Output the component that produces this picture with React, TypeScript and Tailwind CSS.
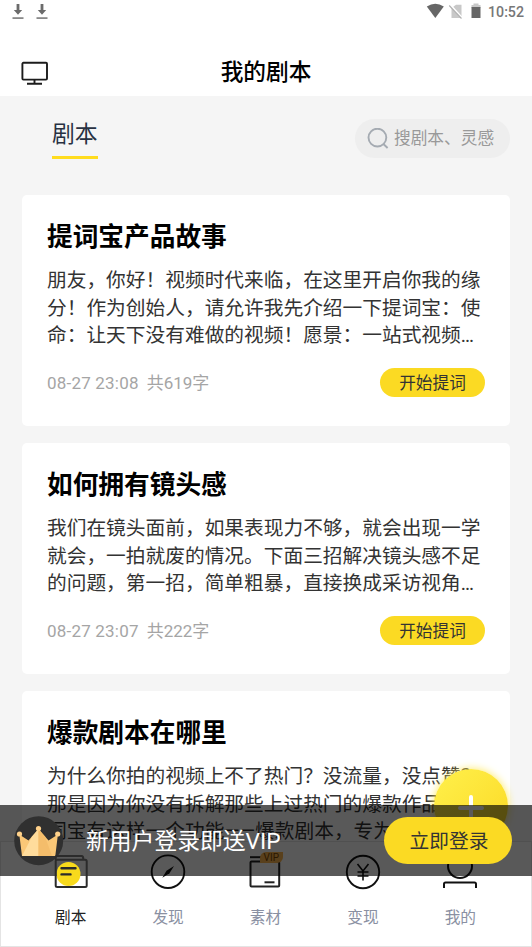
import React from "react";

const scripts = [
  {
    title: "提词宝产品故事",
    lines: ["朋友，你好！视频时代来临，在这里开启你我的缘", "分！作为创始人，请允许我先介绍一下提词宝：使", "命：让天下没有难做的视频！愿景：一站式视频…"],
    date: "08-27 23:08",
    count: "共619字",
  },
  {
    title: "如何拥有镜头感",
    lines: ["我们在镜头面前，如果表现力不够，就会出现一学", "就会，一拍就废的情况。下面三招解决镜头感不足", "的问题，第一招，简单粗暴，直接换成采访视角…"],
    date: "08-27 23:07",
    count: "共222字",
  },
  {
    title: "爆款剧本在哪里",
    lines: ["为什么你拍的视频上不了热门？没流量，没点赞？", "那是因为你没有拆解那些上过热门的爆款作品，提", "词宝有这样一个功能——爆款剧本，专为"],
  },
];

const DownloadIcon = () => (
  <svg width="12" height="16" viewBox="0 0 12 16" fill="#6b6b6b">
    <path d="M4.6 0h2.8v6h2.8L6 10.8 1.8 6h2.8z" />
    <rect x="0.5" y="13.2" width="11" height="1.8" opacity="0.8" />
  </svg>
);

const StatusBar = () => (
  <div className="flex h-6 items-center justify-between pl-3 pr-2">
    <div className="flex gap-3">
      <DownloadIcon />
      <DownloadIcon />
    </div>
    <div className="flex items-center">
      <svg className="overflow-visible" width="64" height="18" viewBox="-2 3 64 18">
        <path d="M0.8 6.5Q9.3 1 17.8 6.5L9.3 18z" fill="#666" />
        <path d="M27 7l3-2.2h5.5V18H25.5V8.5z" fill="#c8c8c8" />
        <path d="M24.3 5L37 19" stroke="#fff" strokeWidth="2" />
        <path d="M23.2 5.5L35.5 18.5" stroke="#b0b0b0" strokeWidth="1.1" />
        <path d="M47.5 3.5h5V5h2v3h-9V5h2z" fill="#c8c8c8" />
        <path d="M45.5 7h9V18h-9z" fill="#666" />
      </svg>
      <span className="w-9 font-[Roboto] text-[14.2px] leading-6 font-medium text-[#777]">10:52</span>
    </div>
  </div>
);

const Header = () => (
  <header className="flex h-[72px] items-start justify-between px-5 pt-[34px]">
    <svg className="mt-[3px]" width="29" height="26" viewBox="0 0 29 26" fill="none" stroke="#1c1c1c" strokeWidth="1.9">
      <rect x="2.4" y="1.8" width="24.6" height="16.8" rx="1" />
      <path d="M14.5 19v4M7 22.8h15" />
    </svg>
    <h1 className="text-[22.7px] leading-[30px] font-medium text-black">我的剧本</h1>
    <div className="w-[29px]" />
  </header>
);

const ScriptCard = ({ script }) => (
  <article className="h-[231px] shrink-0 rounded-[5px] bg-white px-[25px] pt-6">
    <h2 className="text-[25.7px] leading-9 font-bold text-black">{script.title}</h2>
    <div className="mt-3 text-[19.72px] leading-[27.5px] whitespace-nowrap text-[#333]">
      {script.lines.map((line) => (
        <p key={line}>{line}</p>
      ))}
    </div>
    {script.date && (
      <div className="mt-[17px] flex items-center justify-between">
        <p className="flex gap-2 pt-px text-[17px] leading-[30px] text-[#a5a5a5]">
          <span className="tracking-[0.2px]">{script.date}</span>
          <span>{script.count}</span>
        </p>
        <button className="h-[29px] w-[105px] rounded-full bg-[#fbda23] pt-px text-[16.7px] leading-[30px] text-[#333]">
          开始提词
        </button>
      </div>
    )}
  </article>
);

// the highlighted tab icon stays bright above the login banner
const ScriptIcon = () => (
  <svg className="relative z-10" width="36" height="36" viewBox="0 0 36 36" fill="none" stroke="#2b2b2b" strokeWidth="2">
    <circle cx="15.5" cy="20" r="12" fill="#f8da1c" stroke="none" />
    <path d="M2.7 6V3.2Q2.7 2 4 2H28.6Q30.3 2 30.3 5" />
    <rect x="2.7" y="5.7" width="31" height="27.2" rx="1.5" />
    <path d="M8.5 14.2H22.5M8.5 20.4H17.5" strokeWidth="2.4" strokeLinecap="round" />
  </svg>
);

const CompassIcon = () => (
  <svg width="36" height="36" viewBox="0 0 36 36" fill="none" stroke="#111" strokeWidth="1.9">
    <circle cx="18" cy="17.7" r="16.3" />
    <path d="M24 12l-4.5 7.2-7.2 4.6 4.2-7z" fill="#111" stroke="none" />
  </svg>
);

const MaterialIcon = () => (
  <svg width="36" height="36" viewBox="0 0 36 36" fill="none" stroke="#222" strokeWidth="2">
    <path d="M2 3.2H15" />
    <rect x="2.5" y="7.6" width="28.7" height="24.8" rx="1" />
    <path d="M16.5 28.3H26.5" />
  </svg>
);

const YenIcon = () => (
  <svg width="36" height="36" viewBox="0 0 36 36" fill="none" stroke="#111" strokeWidth="1.9">
    <circle cx="18" cy="18" r="16.2" />
    <path d="M12.5 10l5.5 7 5.5-7M18 17v9.5M12.5 18h11M12.5 22h11" strokeWidth="1.6" />
  </svg>
);

const UserIcon = () => (
  <svg width="36" height="36" viewBox="0 0 36 36" fill="none" stroke="#111" strokeWidth="2">
    <circle cx="18" cy="12" r="12" />
    <path d="M2 34v-4q0-1.5 1.5-1.5h29q1.5 0 1.5 1.5v4" />
  </svg>
);

const tabs = [
  { label: "剧本", Icon: ScriptIcon },
  { label: "发现", Icon: CompassIcon },
  { label: "素材", Icon: MaterialIcon },
  { label: "变现", Icon: YenIcon },
  { label: "我的", Icon: UserIcon },
];

const TabBar = () => (
  <nav className="absolute inset-x-0 bottom-0 flex h-[106px] border border-[#e4e4e4] bg-white pt-3 pr-[22px] pl-[21px]">
    {tabs.map(({ label, Icon }, index) => (
      <div key={label} className="relative flex flex-1 flex-col items-center">
        <Icon />
        {index === 2 && (
          <span className="absolute top-[-2px] left-[43px] h-[11px] w-[23px] rounded-tl-md rounded-br-md bg-[#ffb851] text-center text-[10px] leading-[12px] text-[#7a4500]">
            VIP
          </span>
        )}
        <span className={`mt-[15px] text-[15.7px] leading-[26px] ${index === 0 ? "text-[#222]" : "text-[#8a90a2]"}`}>
          {label}
        </span>
      </div>
    ))}
  </nav>
);

const Crown = () => (
  <svg width="50" height="50" viewBox="0 0 50 50">
    <circle cx="24.7" cy="24.7" r="24.5" fill="#303030" />
    <path d="M5.3 18.5L14.5 24.5 24.5 13 34.5 24.5 43.9 18.5 41.3 40H8z" fill="#fac777" />
    <path d="M24.5 13V40H8L18 20.5z" fill="#ffdc9c" />
    <path d="M24.5 13L31 20.5 38 40H24.5z" fill="#f4bd6b" />
    <circle cx="5.5" cy="18" r="2.6" fill="#ffd18a" />
    <circle cx="24.5" cy="12.6" r="2.6" fill="#ffd18a" />
    <circle cx="43.7" cy="18" r="2.6" fill="#ffd18a" />
  </svg>
);

const LoginBanner = () => (
  <div className="absolute inset-x-0 top-[805px] flex h-[71px] items-center bg-black/65 pr-5 pl-[14px]">
    <Crown />
    <p className="ml-[22px] flex-1 pt-[2px] text-[22.8px] leading-8 text-white">新用户登录即送VIP</p>
    <button className="h-[47px] w-[128px] rounded-full bg-[#fbda23] pt-[2px] pl-[2px] text-[19.7px] text-[#333]">
      立即登录
    </button>
  </div>
);

export default function App() {
  return (
    <div className="relative h-[947px] w-[532px] overflow-hidden bg-[#f5f5f5] font-[Roboto,'Noto_Sans_CJK_SC',sans-serif]">
      <div className="bg-white">
        <StatusBar />
        <Header />
      </div>
      <div className="flex h-[99px] items-start justify-between pr-[22px] pl-[52px]">
        <div className="mt-[22px] border-b-3 border-[#ffdc1e] pb-[4px] text-[22.8px] leading-[34px] text-[#283142]">剧本</div>
        <div className="mt-[23px] flex h-[39px] w-[155px] items-center rounded-full bg-[#eee] pl-[12px] text-[16.7px] text-[#999]">
          <svg width="22" height="22" viewBox="0 0 22 22" fill="none" stroke="#a5abb2" strokeWidth="1.9">
            <circle cx="10.4" cy="9.6" r="8.9" />
            <path d="M16.4 16l4.2 4" />
          </svg>
          <span className="ml-[5px]">搜剧本、灵感</span>
        </div>
      </div>
      <main className="flex flex-col gap-[17px] px-[22px]">
        {scripts.map((script) => (
          <ScriptCard key={script.title} script={script} />
        ))}
      </main>
      <button className="absolute top-[769px] left-[434px] h-[74px] w-[74px] rounded-full bg-linear-to-br from-[#fff04a] to-[#fbd91f] pt-[3px] shadow-[0_0_8px_#ffe95a]">
        <svg className="mx-auto" width="26" height="26" viewBox="0 0 26 26" stroke="#fff" strokeWidth="4" strokeLinecap="round">
          <path d="M13 2v22M2 13h22" />
        </svg>
      </button>
      <TabBar />
      <LoginBanner />
    </div>
  );
}
